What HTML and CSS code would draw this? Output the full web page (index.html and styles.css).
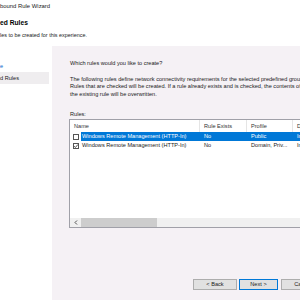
FILE: index.html
```html
<!DOCTYPE html>
<html>
<head>
<meta charset="utf-8">
<link rel="stylesheet" href="styles.css">
</head>
<body>
<div class="window">
  <div class="titlebar">bound Rule Wizard</div>
  <div class="header">
    <div class="heading">ed Rules</div>
    <div class="subtitle">les to be created for this experience.</div>
  </div>
  <div class="main">
    <div class="steps">
      <div class="step link">e</div>
      <div class="step current">d Rules</div>
    </div>
    <div class="content">
      <div class="question">Which rules would you like to create?</div>
      <div class="para">
        <div>The following rules define network connectivity requirements for the selected predefined group.</div>
        <div>Rules that are checked will be created. If a rule already exists and is checked, the contents of</div>
        <div>the existing rule will be overwritten.</div>
      </div>
      <div class="label">Rules:</div>
      <div class="table">
        <div class="thead">
          <div class="th c-name">Name</div>
          <div class="th c-exists">Rule Exists</div>
          <div class="th c-profile">Profile</div>
          <div class="th c-desc">De</div>
        </div>
        <div class="tbody">
          <div class="row selected">
            <div class="chk"><span class="box"></span></div>
            <div class="sel">
              <div class="td c-label">Windows Remote Management (HTTP-In)</div>
              <div class="td c-exists">No</div>
              <div class="td c-profile">Public</div>
              <div class="td c-desc">In</div>
            </div>
          </div>
          <div class="row">
            <div class="chk"><span class="box"><svg width="6" height="6" viewBox="0 0 6 6"><path d="M1 3.1 L2.4 4.5 L5 1.4" fill="none" stroke="#444" stroke-width="0.9"/></svg></span></div>
            <div class="sel">
              <div class="td c-label">Windows Remote Management (HTTP-In)</div>
              <div class="td c-exists">No</div>
              <div class="td c-profile">Domain, Priv...</div>
              <div class="td c-desc">In</div>
            </div>
          </div>
        </div>
        <div class="hscroll">
          <div class="arrow"><svg width="4" height="5" viewBox="0 0 4 5"><path d="M3 0.5 L1 2.5 L3 4.5" fill="none" stroke="#505050" stroke-width="1"/></svg></div>
          <div class="thumb"></div>
        </div>
      </div>
      <div class="buttons">
        <div class="btn back">&lt; Back</div>
        <div class="btn next">Next &gt;</div>
        <div class="btn cancel">Cancel</div>
      </div>
    </div>
  </div>
</div>
</body>
</html>
```
FILE: styles.css
```css
html, body {
  margin: 0;
  padding: 0;
}
body {
  width: 300px;
  height: 300px;
  overflow: hidden;
  background: #ffffff;
  font-family: "Liberation Sans", Arial, sans-serif;
  color: #1a1a1a;
}
.window {
  width: 300px;
  height: 300px;
  display: flex;
  flex-direction: column;
}
.titlebar {
  height: 13px;
  line-height: 13px;
  font-size: 5.9px;
  white-space: nowrap;
  text-align: left;
}
.header {
  height: 33px;
  background: #fff;
}
.heading {
  margin-top: 6px;
  line-height: 8px;
  font-size: 6.7px;
  font-weight: bold;
  color: #000;
}
.subtitle {
  margin-top: 5px;
  line-height: 7px;
  font-size: 5.4px;
}
.main {
  flex: 1;
  display: flex;
  min-height: 0;
}
.steps {
  width: 52px;
  flex: none;
  background: #fff;
  padding-top: 14px;
  box-sizing: border-box;
  font-size: 5.6px;
}
.step {
  height: 12px;
  line-height: 12px;
  white-space: nowrap;
  width: 49px;
}
.step.link {
  color: #0066cc;
}
.step.current {
  background: #efedef;
}
.content {
  flex: 1;
  min-width: 0;
  background: #f5f1f5;
  padding: 13px 0 0 18px;
  overflow: hidden;
  font-size: 5.6px;
}
.question {
  line-height: 8px;
  white-space: nowrap;
}
.para {
  margin-top: 8.75px;
  line-height: 7.5px;
  white-space: nowrap;
}
.label {
  margin-top: 11.75px;
  line-height: 8px;
}
.table {
  margin-top: 1px;
  margin-left: -1px;
  width: 270px;
  height: 109px;
  box-sizing: border-box;
  border: 1px solid #a0a0a8;
  background: #fff;
  display: flex;
  flex-direction: column;
}
.thead {
  height: 12px;
  display: flex;
  flex: none;
}
.th {
  line-height: 12px;
  padding-left: 4px;
  box-sizing: border-box;
  border-right: 1px solid #e5e5e5;
  white-space: nowrap;
  color: #333;
}
.c-name { width: 130px; }
.c-exists { width: 47px; }
.c-profile { width: 46px; }
.c-desc { width: 40px; border-right: none; }
.tbody {
  flex: 1;
}
.row {
  height: 9px;
  display: flex;
  align-items: stretch;
}
.chk {
  width: 11px;
  flex: none;
  display: flex;
  align-items: center;
  padding-left: 3px;
  box-sizing: border-box;
}
.box {
  width: 6px;
  height: 6px;
  box-sizing: border-box;
  border: 1px solid #555;
  background: #fff;
  position: relative;
}
.box svg {
  position: absolute;
  left: -1px;
  top: -1px;
}
.sel {
  flex: 1;
  display: flex;
  line-height: 9px;
  white-space: nowrap;
}
.row.selected .sel {
  background: #0078d7;
  color: #fff;
}
.td {
  box-sizing: border-box;
  padding-left: 4px;
  overflow: hidden;
}
.td.c-label {
  width: 119px;
  padding-left: 1px;
}
.hscroll {
  height: 9px;
  flex: none;
  display: flex;
  background: #f0f0f0;
}
.arrow {
  width: 11px;
  display: flex;
  align-items: center;
  justify-content: center;
}
.thumb {
  width: 76px;
  background: #cdcdcd;
}
.buttons {
  margin-top: 51px;
  margin-left: 123px;
  display: flex;
}
.btn {
  height: 11px;
  line-height: 9px;
  box-sizing: border-box;
  border: 1px solid #adadad;
  background: #e1e1e1;
  text-align: center;
  font-size: 5.6px;
  flex: none;
}
.back { width: 44px; }
.next {
  width: 39px;
  margin-left: 2px;
  border-color: #0078d7;
}
.cancel {
  width: 44px;
  margin-left: 3px;
}
```
